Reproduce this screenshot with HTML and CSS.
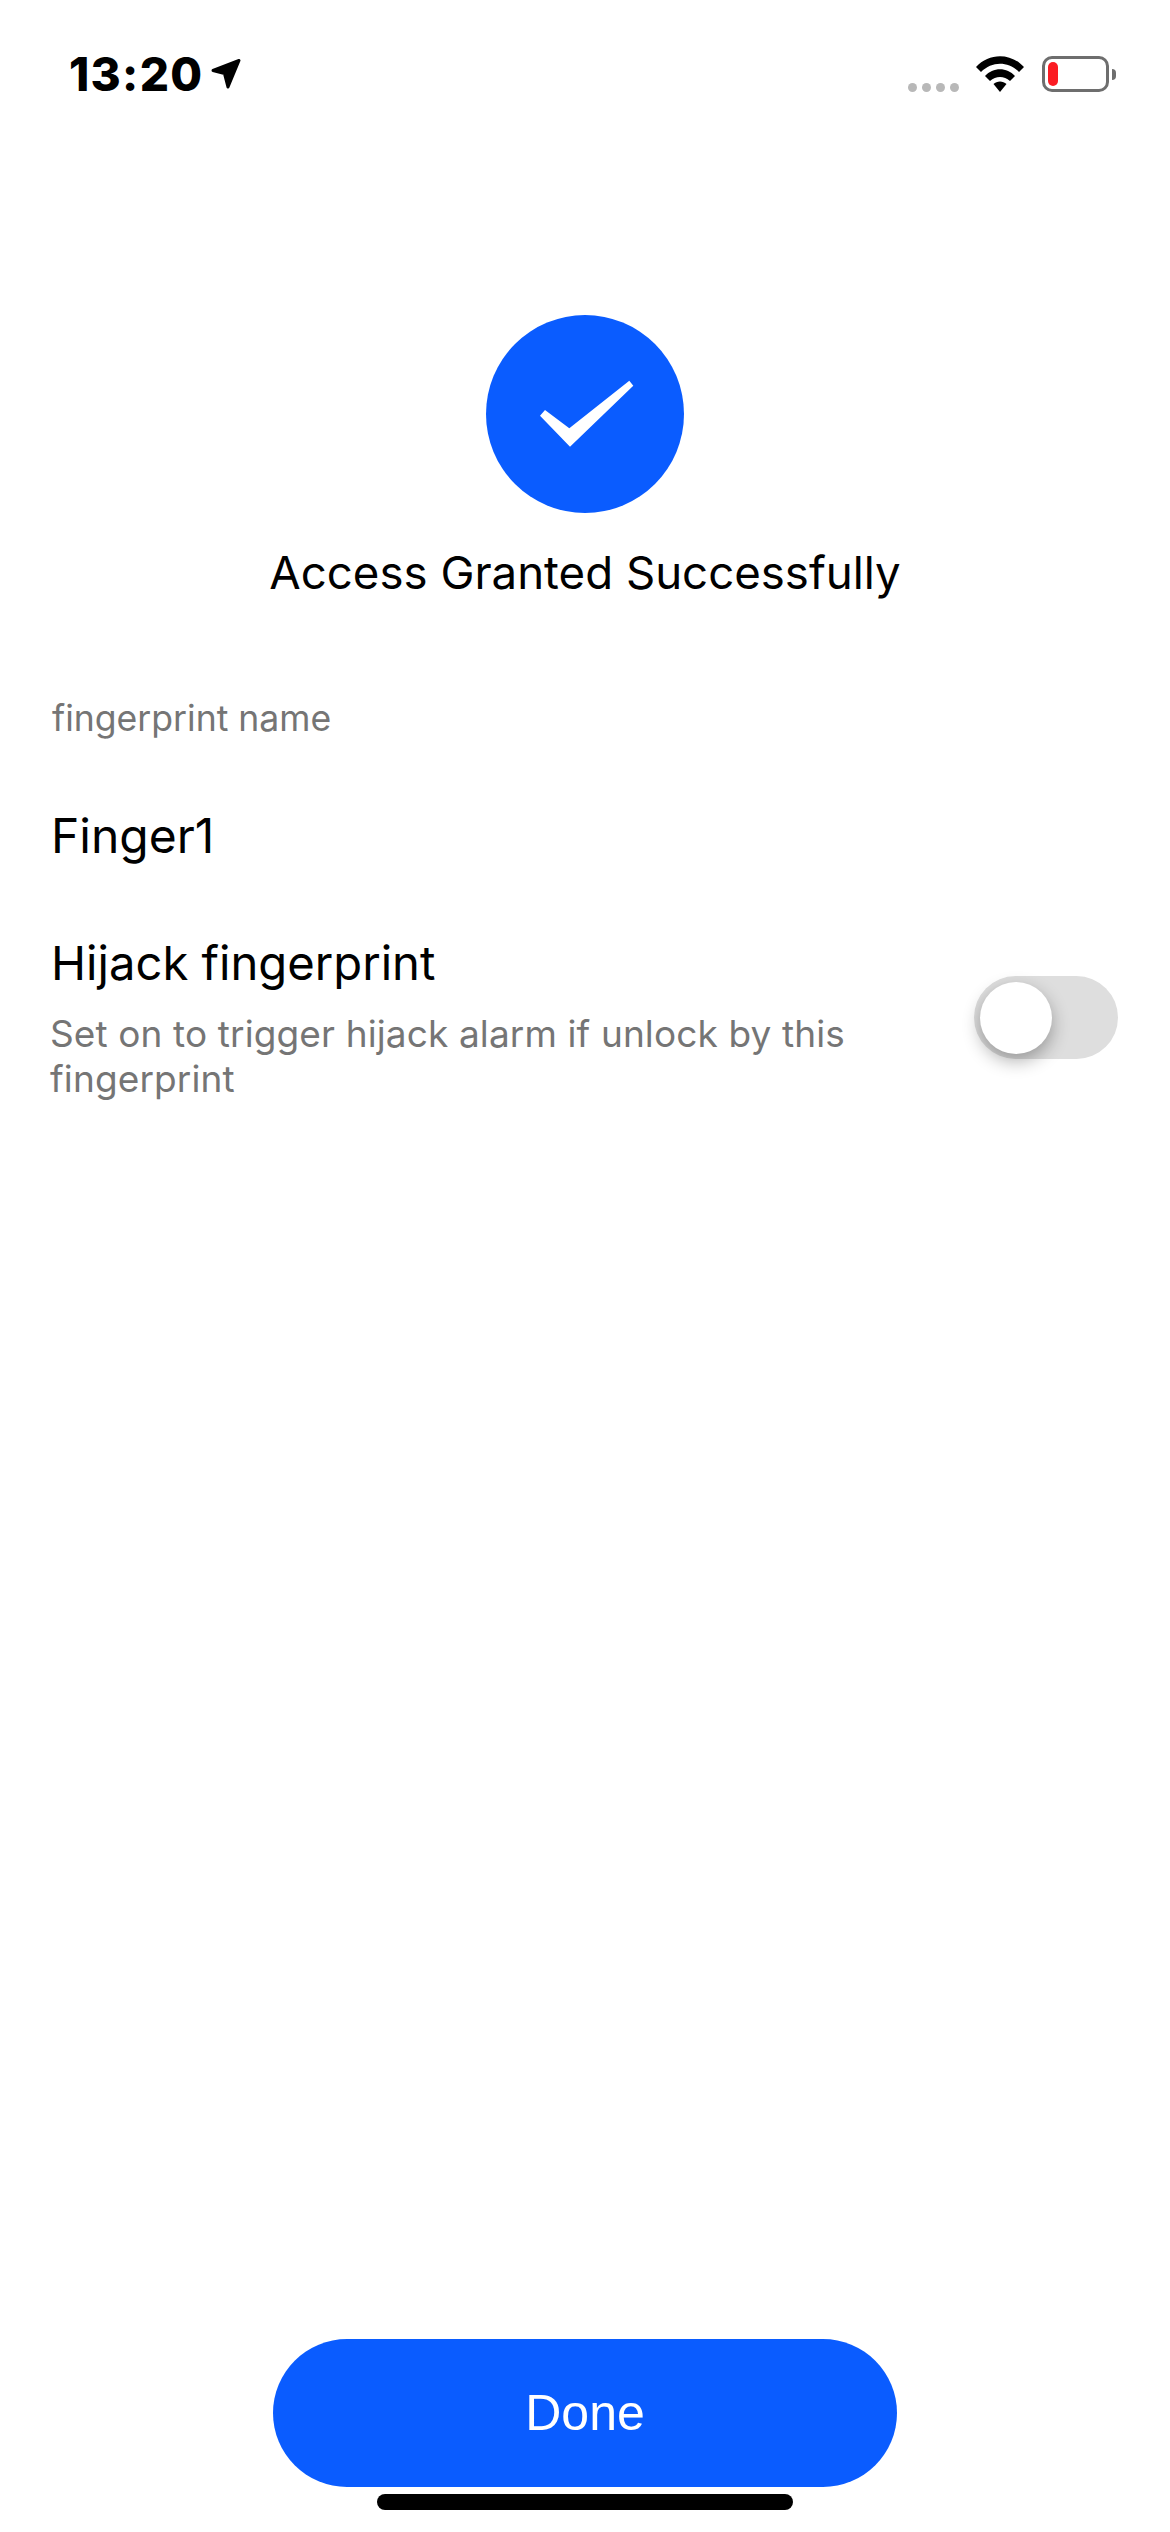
FILE: index.html
```html
<!DOCTYPE html>
<html lang="en">
<head>
<meta charset="utf-8">
<title>Access Granted</title>
<link rel="stylesheet" href="styles.css">
</head>
<body>
<div class="page">

	<!-- status bar -->
	<div class="status">
		<div class="status-left">
			<span class="time">13:20</span>
			<svg class="arrow" viewBox="0 0 30 32"><path d="M2 12.5 L28 2.5 L17 29 L13.5 15.5 Z" fill="#000" stroke="#000" stroke-width="3" stroke-linejoin="round"/></svg>
		</div>
		<div class="status-right">
			<div class="dots"><i></i><i></i><i></i><i></i></div>
			<svg class="wifi" viewBox="0 0 48 36"><path d="M0 11 C13 -3.5 35 -3.5 48 11 L43 16 C32 5 16 5 5 16 Z M9 20 C17 11 31 11 39 20 L34 25 C28 19.5 20 19.5 14 25 Z M17.5 28 C21 24.5 27 24.5 30.5 28 L24 36 Z" fill="#000"/></svg>
			<div class="battery"><div class="battery-level"></div></div>
			<div class="battery-nub"></div>
		</div>
	</div>

	<!-- result -->
	<div class="result">
		<svg class="tick" viewBox="0 0 198 198">
			<circle cx="99" cy="99" r="99" fill="#0a5cff"/>
			<path d="M54 100.7 L59 95 L83.3 113.3 L143.3 65.7 L147.3 70.7 L84 131.7 Z" fill="#fff"/>
		</svg>
		<div class="result-title">Access Granted Successfully</div>
	</div>

	<!-- form -->
	<div class="field-label">fingerprint name</div>
	<div class="field-value">Finger1</div>

	<div class="hijack">
		<div class="hijack-text">
			<div class="hijack-title">Hijack fingerprint</div>
			<div class="hijack-desc">Set on to trigger hijack alarm if unlock by this fingerprint</div>
		</div>
		<div class="switch"><div class="knob"></div></div>
	</div>

	<!-- bottom -->
	<div class="done">Done</div>
	<div class="home-bar"></div>

</div>
</body>
</html>
```

FILE: styles.css
```css
html, body {
	margin: 0;
	padding: 0;
	background: #fff;
}

.page {
	display: flex;
	flex-direction: column;
	height: 2532px;
	overflow: hidden;
	font-family: Inter, "Liberation Sans", sans-serif;
	color: #000;
}

.status {
	display: flex;
	justify-content: space-between;
	align-items: flex-start;
	height: 315px;
	padding: 56px 54px 0 69px;
	box-sizing: border-box;
	flex-shrink: 0;
}

.status-left {
	display: flex;
	align-items: center;
	height: 36px;
}

.time {
	font-size: 46px;
	font-weight: 800;
	line-height: 36px;
	letter-spacing: 1.3px;
}

.arrow {
	width: 30px;
	height: 32px;
	margin-left: 8px;
}

.status-right {
	display: flex;
	align-items: flex-end;
	height: 36px;
}

.dots {
	display: flex;
	gap: 5px;
	margin-right: 17px;
	margin-bottom: 0;
}

.dots i {
	display: block;
	width: 9px;
	height: 9px;
	border-radius: 50%;
	background: #b8b8b8;
}

.wifi {
	width: 48px;
	height: 36px;
	margin-right: 18px;
}

.battery {
	box-sizing: border-box;
	width: 67px;
	height: 36px;
	border: 3px solid #6e6e6e;
	border-radius: 10px;
	padding: 3px;
}

.battery-level {
	width: 10px;
	height: 100%;
	border-radius: 5px;
	background: #fb1c23;
}

.battery-nub {
	width: 4px;
	height: 11px;
	margin: 0 0 12px 3px;
	border-radius: 0 6px 6px 0;
	background: #6e6e6e;
}

.result {
	display: flex;
	flex-direction: column;
	align-items: center;
}

.tick {
	display: block;
	width: 198px;
	height: 198px;
}

.result-title {
	margin-top: 32px;
	font-size: 45.6px;
	line-height: 56px;
}

.field-label {
	margin: 96px 0 0 52px;
	font-size: 35.6px;
	line-height: 44px;
	color: #757575;
}

.field-value {
	margin: 66px 0 0 51px;
	font-size: 48px;
	line-height: 58px;
}

.hijack {
	display: flex;
	justify-content: space-between;
	align-items: center;
	margin-top: 69px;
	padding: 0 52px 0 51px;
}

.hijack-text {
	width: 860px;
}

.hijack-title {
	font-size: 47.2px;
	line-height: 58px;
}

.hijack-desc {
	margin: 19px 0 0 -1px;
	font-size: 37px;
	letter-spacing: 0.12px;
	line-height: 45px;
	color: #757575;
}

.switch {
	box-sizing: border-box;
	display: flex;
	align-items: center;
	width: 144px;
	height: 83px;
	padding: 0 6px;
	border-radius: 42px;
	background: #dedede;
}

.knob {
	width: 72px;
	height: 72px;
	border-radius: 50%;
	background: #fff;
	box-shadow: 0 7px 18px rgba(0, 0, 0, 0.32);
}

.done {
	display: flex;
	align-items: center;
	justify-content: center;
	align-self: center;
	margin-top: auto;
	width: 624px;
	height: 148px;
	border-radius: 74px;
	background: #0a5cff;
	color: #fff;
	font-family: "Liberation Sans", sans-serif;
	font-size: 50px;
}

.home-bar {
	align-self: center;
	width: 416px;
	height: 16px;
	margin: 7px 0 22px;
	border-radius: 8px;
	background: #000;
}
```
